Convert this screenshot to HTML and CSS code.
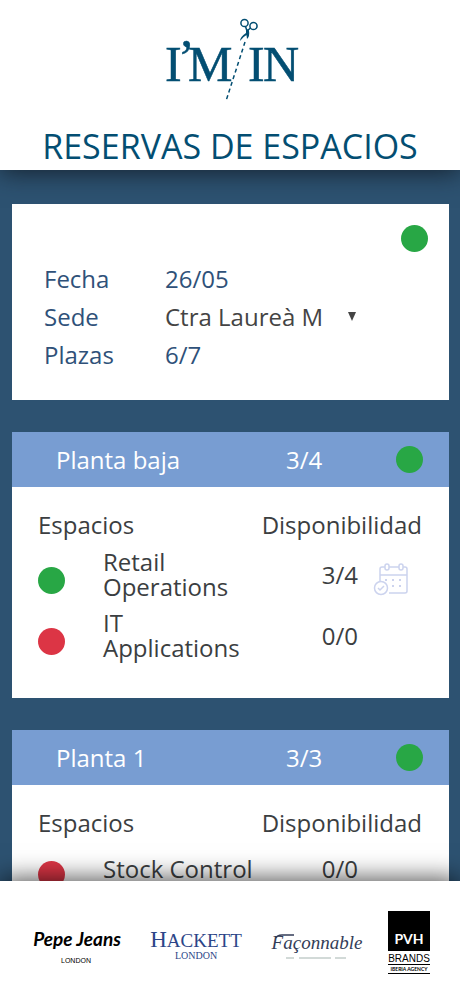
FILE: index.html
```html
<!DOCTYPE html>
<html lang="es">
<head>
<meta charset="utf-8">
<meta name="viewport" content="width=device-width, initial-scale=1">
<title>Reservas de espacios</title>
<link rel="stylesheet" href="styles.css">
</head>
<body>
<header class="top">
  <svg class="logo" viewBox="0 0 140 86" role="img" aria-label="I'm in">
    <g class="logo-text">
      <text x="5 18 28" y="65 58 65">I’M</text>
      <text x="88 103" y="65">IN</text>
    </g>
    <path class="cut" d="M85 26 66 85"/>
    <g class="scissors">
      <circle cx="84.500" cy="7" r="3.600"/>
      <circle cx="93.500" cy="10" r="3.600"/>
      <path d="M85.500 10.500 87 15M90.500 12 87 15"/>
    </g>
    <path class="blade" d="M86 13 89 14 88 18Q84 20 80 25 80 21 86 17ZM86 15 89 15Q90 20 87 23Z"/>
  </svg>
  <h1>RESERVAS DE ESPACIOS</h1>
</header>

<main>
  <section class="card summary">
    <span class="dot green"></span>
    <div class="fields">
      <span>Fecha</span><span>26/05</span>
      <label for="sede">Sede</label>
      <div class="picker">
        <select id="sede"><option>Ctra Laureà M</option></select>
        <svg viewBox="0 0 8 9" aria-hidden="true"><path d="M0 0h8L4 9z"/></svg>
      </div>
      <span>Plazas</span><span>6/7</span>
    </div>
  </section>

  <section class="card floor">
    <header><h2>Planta baja</h2><span>3/4</span><span class="dot green"></span></header>
    <table>
      <thead><tr><th colspan="2">Espacios</th><th colspan="2">Disponibilidad</th></tr></thead>
      <tbody>
        <tr>
          <td class="state"><span class="dot green"></span></td>
          <td>Retail<br>Operations</td>
          <td class="count">3/4</td>
          <td class="action">
            <button type="button" aria-label="Reservar">
              <svg viewBox="0 0 36 34">
                <path d="M7 20V6q0-2 2-2h23q2 0 2 2v22q0 2-2 2H16M7 12h27"/>
                <rect class="ring" x="12" y="1" width="4" height="6" rx="2"/>
                <rect class="ring" x="26" y="1" width="4" height="6" rx="2"/>
                <path class="days" d="M12 17h2M19 17h2M26 17h2M19 23h2M26 23h2"/>
                <circle cx="8" cy="25" r="6.500"/>
                <path d="m5 25 2 2 4-4"/>
              </svg>
            </button>
          </td>
        </tr>
        <tr>
          <td class="state"><span class="dot red"></span></td>
          <td>IT<br>Applications</td>
          <td class="count">0/0</td>
          <td class="action"></td>
        </tr>
      </tbody>
    </table>
  </section>

  <section class="card floor">
    <header><h2>Planta 1</h2><span>3/3</span><span class="dot green"></span></header>
    <table>
      <thead><tr><th colspan="2">Espacios</th><th colspan="2">Disponibilidad</th></tr></thead>
      <tbody>
        <tr>
          <td class="state"><span class="dot red"></span></td>
          <td>Stock Control</td>
          <td class="count">0/0</td>
          <td class="action"></td>
        </tr>
      </tbody>
    </table>
  </section>
</main>

<footer class="brands">
  <svg class="brand" viewBox="0 0 94 42" role="img" aria-label="Pepe Jeans London">
    <text class="pepe" x="47" y="24">Pepe Jeans</text>
    <text class="pepe-sub" x="46" y="41">LONDON</text>
  </svg>
  <svg class="brand" viewBox="0 0 94 42" role="img" aria-label="Hackett London">
    <text class="hackett" x="47" y="25"><tspan class="cap">H</tspan>ACKETT</text>
    <text class="hackett-sub" x="47" y="37">LONDON</text>
  </svg>
  <svg class="brand" viewBox="0 0 94 42" role="img" aria-label="Façonnable">
    <text class="faco" x="48" y="27">Façonnable</text>
    <path class="swash" d="M7 16q1-3 6-3h12"/>
    <path class="rule" d="M17 36h8M30 36h32M66 36h11"/>
  </svg>
  <svg class="pvh" viewBox="0 0 42 64" role="img" aria-label="PVH Brands Iberia Agency">
    <path d="M0 0h42v40H0z"/>
    <text class="pvh-name" x="21" y="33">PVH</text>
    <text class="pvh-brands" x="21" y="51">BRANDS</text>
    <path d="M0 53h42v1H0zM0 62h42v1H0z"/>
    <text class="pvh-sub" x="21" y="60">IBERIA AGENCY</text>
  </svg>
</footer>
</body>
</html>
```
FILE: styles.css
```css
* { box-sizing: border-box; }

body {
  display: flex;
  flex-direction: column;
  height: 100vh;
  margin: 0;
  background: #2d5271;
  color: #3b3e41;
  font: 24px/25px "Open Sans", Lato, sans-serif;
}

h1, h2, th { margin: 0; font: inherit; }

.top {
  z-index: 1;
  display: flex;
  flex-direction: column;
  align-items: center;
  gap: 22px;
  padding: 16px 0 2px;
  background: #fff;
  box-shadow: 0 2px 24px #14202c;
}
.top h1 { color: #034e72; font-size: 34px; line-height: 44px; }

.logo { width: 140px; height: 86px; fill: #034e72; }
.logo-text { font: 50px "Liberation Serif", serif; stroke: #034e72; stroke-width: .5px; }
.cut { fill: none; stroke: #034e72; stroke-width: 1.5px; stroke-dasharray: 4 3; }
.scissors { fill: none; stroke: #034e72; stroke-width: 1.5px; }

main {
  display: flex;
  flex: 1;
  flex-direction: column;
  gap: 32px;
  min-height: 0;
  padding: 34px 11px 32px 12px;
  overflow-y: auto;
  scrollbar-width: none;
}

.card { flex: none; background: #fff; }

.dot { display: block; width: 27px; height: 27px; border-radius: 50%; }
.green { background: #28a745; }
.red { background: #dc3545; }

.summary { padding: 21px 21px 27px 32px; }
.summary > .dot { margin: 0 0 7px auto; }

.fields {
  display: grid;
  grid-template-columns: 121px 1fr;
  grid-auto-rows: 38px;
  align-items: center;
  color: #2f5179;
}

.picker { display: flex; align-items: center; gap: 24px; }
.picker select {
  padding: 0;
  border: 0;
  background: none;
  appearance: none;
  color: #444;
  font: inherit;
}
.picker svg { width: 8px; height: 9px; fill: #444; }

.floor { padding-bottom: 32px; }
.floor header {
  display: grid;
  grid-template-columns: 230px 1fr auto;
  align-items: center;
  height: 55px;
  padding: 0 26px 0 44px;
  background: #789dd2;
  color: #fff;
}

table {
  width: calc(100% - 53px);
  margin-left: 26px;
  border-collapse: collapse;
}
th { padding: 25px 0 7px; text-align: left; }
th:last-child { text-align: right; }
tbody tr { height: 54px; }
td { padding: 5px 0 6px; vertical-align: middle; }
.state { width: 65px; }
.state .dot { margin-top: 12px; }
.count { text-align: right; }
.action { width: 64px; padding-left: 15px; }
.action button { display: block; margin-top: 12px; padding: 0; border: 0; background: none; }
.action svg {
  display: block;
  width: 36px;
  height: 34px;
  fill: none;
  stroke: #ccd3ee;
  stroke-width: 1.5px;
}
.action .ring, .action circle { fill: #fff; }
.action .days { stroke-width: 2px; }

.brands {
  z-index: 1;
  display: flex;
  justify-content: space-between;
  align-items: center;
  height: 115px;
  padding: 8px 30px 0;
  background: #fff;
  box-shadow: 0 -2px 24px rgb(0 0 0 / 70%);
}
.brand { width: 94px; height: 42px; }
.brands text { text-anchor: middle; }
.pepe { font: italic bold 19px Lato, sans-serif; }
.pepe-sub { font: 7px "Liberation Sans", sans-serif; }
.hackett, .hackett-sub { fill: #2c4588; font-family: "Liberation Serif", serif; }
.hackett { font-size: 19px; }
.hackett .cap { font-size: 23px; }
.hackett-sub { font-size: 10px; }
.faco { fill: #333d58; font: italic 19px "Liberation Serif", serif; }
.swash { fill: none; stroke: #333d58; stroke-width: 1.5px; }
.rule { stroke: #a5b4b0; stroke-width: 1px; }
.pvh { width: 42px; height: 64px; }
.pvh-name { fill: #fff; font: bold 14px Lato, sans-serif; }
.pvh-brands { font: 10px "Liberation Sans", sans-serif; }
.pvh-sub { font: bold 5px Lato, sans-serif; }
```
